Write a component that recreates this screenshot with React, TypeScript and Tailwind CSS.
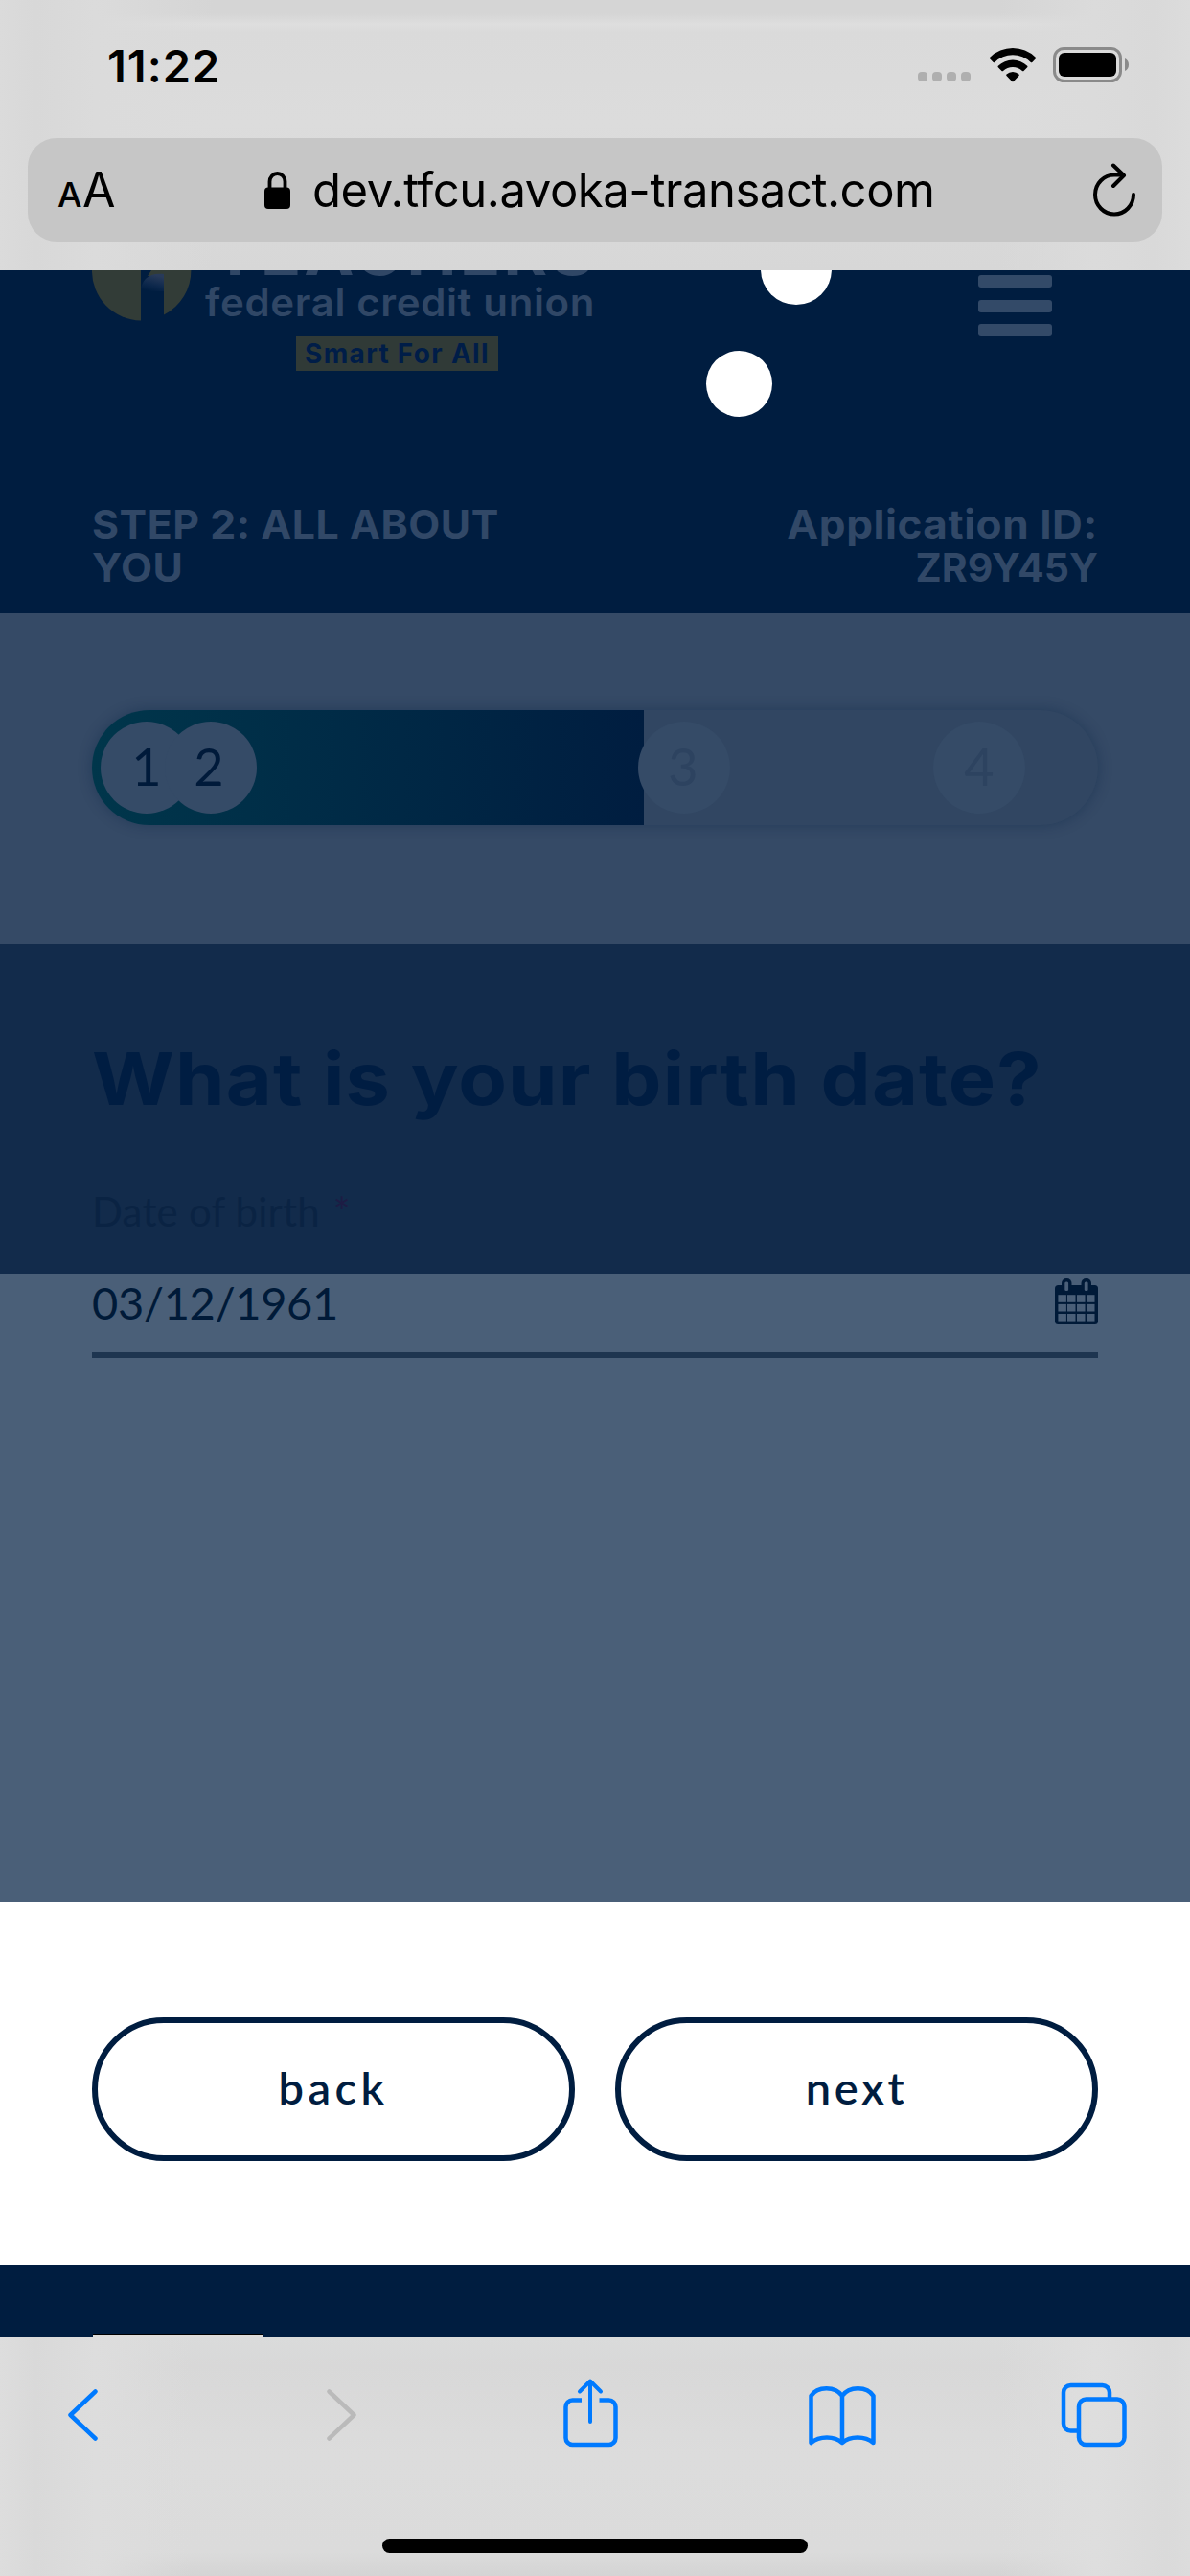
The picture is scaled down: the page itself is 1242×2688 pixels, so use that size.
import React from "react";

function StatusBar() {
  return (
    <div className="flex h-[136px] items-center pl-[112px] pr-[63px] text-black">
      <span className="text-[47px] font-semibold leading-none tracking-[1px]">11:22</span>
      <div className="ml-auto flex items-center">
        <div className="mt-[24px] flex gap-[5px]">
          <i className="h-[10px] w-[10px] rounded-[4px] bg-[#afafaf]" />
          <i className="h-[10px] w-[10px] rounded-[4px] bg-[#afafaf]" />
          <i className="h-[10px] w-[10px] rounded-[4px] bg-[#afafaf]" />
          <i className="h-[10px] w-[10px] rounded-[4px] bg-[#afafaf]" />
        </div>
        <svg className="ml-[19px]" width="50" height="36" viewBox="0 0 50 36">
          <path d="M1.2 9.8a34 34 0 0 1 47.6 0c.5.5.5 1 .1 1.5l-3.6 3.6c-.5.5-1 .5-1.5 0a27 27 0 0 0-37.6 0c-.5.5-1 .5-1.5 0L1.1 11.3c-.4-.5-.4-1 .1-1.5Z" />
          <path d="M9.8 18.8a21.5 21.5 0 0 1 30.4 0c.5.5.5 1 0 1.5L36.5 24c-.5.4-1 .4-1.5 0a14.600 14.600 0 0 0-20 0c-.5.4-1 .4-1.500 0l-3.700-3.700c-.5-.5-.5-1 0-1.500Z" />
          <path d="M18.500 27.600a9.500 9.500 0 0 1 13 0c.5.5.5 1 0 1.500l-5.700 5.800c-.5.5-1.100.5-1.600 0l-5.700-5.800c-.5-.5-.5-1 0-1.500Z" />
        </svg>
        <svg className="ml-[17px]" width="80" height="38" viewBox="0 0 80 38">
          <rect x="1.500" y="1.500" width="69" height="34" rx="10" fill="none" stroke="#8a8a8a" strokeWidth="3" />
          <rect x="6" y="6" width="60" height="25" rx="6" />
          <path d="M75 12c2.500 1 4 3.500 4 6.500S77.500 24 75 25Z" fill="#8a8a8a" />
        </svg>
      </div>
    </div>
  );
}

function AddressBar() {
  return (
    <div className="mx-[29px] mt-[8px] flex h-[108px] items-center rounded-[30px] bg-[#c6c6c6] pl-[32px] pr-[27px] text-black">
      <div className="flex w-[58px] items-baseline leading-none">
        <span className="-ml-[1px] text-[36px] font-medium tracking-[0.500px]">A</span>
        <span className="text-[50px]">A</span>
      </div>
      <svg className="ml-[157px]" width="27" height="39" viewBox="0 0 27 39">
        <rect y="16.500" width="27" height="22.500" rx="4" />
        <path d="M5.500 18v-7.500a8 8.500 0 0 1 16 0V18" fill="none" stroke="black" strokeWidth="3.800" />
      </svg>
      <span className="ml-[23px] whitespace-nowrap text-[49px] leading-none tracking-[-0.470px]">
        dev.tfcu.avoka-transact.com
      </span>
      <svg className="ml-auto" width="46" height="56" viewBox="0 0 46 56" fill="none" stroke="black" strokeWidth="4" strokeLinecap="round" strokeLinejoin="round">
        <path d="M43 33A20 20.500 0 1 1 23 12.500h9" />
        <path d="M22 2.500l11 10.500-11 11" />
      </svg>
    </div>
  );
}

function BrandMark() {
  return (
    <svg width="104" height="53" viewBox="0 0 104 53">
      <defs>
        <linearGradient id="trunk" x1="0.700" y1="0.100" x2="0.400" y2="1">
          <stop offset="0" stopColor="#283a59" />
          <stop offset="0.600" stopColor="#0d284c" />
          <stop offset="1" stopColor="#001d40" />
        </linearGradient>
      </defs>
      <path d="M0 0H51V52.500A51.700 51.700 0 0 1 0 0Z" fill="#323c37" />
      <path d="M62 0H103.400A51.700 51.700 0 0 1 75 46.500V0Z" fill="#323c37" />
      <path d="M62 0H76V6H58Z" fill="#323c37" />
      <path d="M51 22C51 10 60 2 75 4V22Z" fill="url(#trunk)" />
    </svg>
  );
}

function Header() {
  return (
    <header className="relative h-[358px] overflow-hidden bg-[#001d40] px-[96px]">
      <div className="flex h-[243px] items-start">
        <BrandMark />
        <div className="ml-[14px] flex w-[404px] flex-col text-[#304766]">
          <span className="-mt-[55px] ml-[8px] whitespace-nowrap text-[70px] font-bold leading-[70px] tracking-[3px]">TEACHERS</span>
          <span className="-mt-[1px] origin-left scale-x-[1.050] whitespace-nowrap text-[40px] font-semibold leading-[40px] tracking-[0.600px]">
            federal credit union
          </span>
          <span className="ml-[95px] mt-[15px] flex h-[36px] w-[211px] items-center justify-center whitespace-nowrap bg-[#303a37] text-[28px] font-bold leading-none tracking-[1.300px] text-[#001d48]">
            Smart For All
          </span>
        </div>
        <div className="ml-auto mr-[48px] mt-[5px] flex flex-col gap-[12.500px]">
          <i className="h-[13px] w-[77px] rounded-[3px] bg-[#334a68]" />
          <i className="h-[13px] w-[77px] rounded-[3px] bg-[#334a68]" />
          <i className="h-[13px] w-[77px] rounded-[3px] bg-[#334a68]" />
        </div>
      </div>
      <div className="flex justify-between text-[41px] font-bold leading-[45px] text-[#314867]">
        <div className="flex origin-left scale-x-[1.045] flex-col tracking-[0.500px]">
          <span>STEP 2: ALL ABOUT</span>
          <span>YOU</span>
        </div>
        <div className="flex flex-col items-end">
          <span className="origin-right scale-x-[1.075] tracking-[0.500px]">Application ID:</span>
          <span>ZR9Y45Y</span>
        </div>
      </div>
      <i className="absolute left-[794px] top-[-38px] h-[74px] w-[74px] rounded-full bg-white" />
      <i className="absolute left-[737px] top-[84px] h-[69px] w-[69px] rounded-full bg-white" />
    </header>
  );
}

function Progress() {
  return (
    <section className="h-[345px] bg-[#354a66] px-[96px] pt-[101px] font-['Lato',sans-serif] text-[54px] leading-none">
      <div className="flex h-[120px] items-center rounded-full bg-[#314662] shadow-[0_0_14px_1px_rgba(0,29,64,0.3)]">
        <div className="flex h-full w-[576px] items-center rounded-l-full rounded-r-[3px] bg-linear-to-r from-[#00364b] to-[#001d40] pl-[9px] text-[#001a3a]">
          <span className="flex h-[96px] w-[96px] items-center justify-center rounded-full bg-[#354b67] pb-[3px]">1</span>
          <span className="-ml-[29px] flex h-[96px] w-[96px] items-center justify-center rounded-full bg-[#354b67] pb-[3px] pr-[4px]">2</span>
        </div>
        <span className="-ml-[6px] flex h-[96px] w-[96px] items-center justify-center rounded-full bg-[#354b67] pb-[3px] pr-[2px] text-[#2d4360]">3</span>
        <span className="ml-[212px] flex h-[96px] w-[96px] items-center justify-center rounded-full bg-[#354b67] pb-[3px] text-[#2d4360]">4</span>
      </div>
    </section>
  );
}

function CalendarIcon() {
  return (
    <svg width="45" height="48" viewBox="0 0 45 48">
      <rect y="7" width="45" height="41" rx="3.500" fill="#001a38" />
      <rect x="7" width="10.500" height="17" rx="5" fill="#001a38" />
      <rect x="27.500" width="10.500" height="17" rx="5" fill="#001a38" />
      <rect x="10.300" y="3.500" width="3.800" height="9.500" rx="1.500" fill="#4a5f78" />
      <rect x="30.800" y="3.500" width="3.800" height="9.500" rx="1.500" fill="#4a5f78" />
      {[17.2, 26.9, 37].map((y) =>
        [3.4, 13, 23, 33].map((x) => <rect key={`${x}-${y}`} x={x} y={y} width="8.500" height="7.600" fill="#4a5f78" />),
      )}
    </svg>
  );
}

function Question() {
  return (
    <>
      <section className="h-[344px] bg-[#122b4b] px-[96px] pt-[100px]">
        <h1 className="origin-left scale-x-[1.090] whitespace-nowrap text-[76px] font-bold leading-[80px] tracking-[1px] text-[#001d42]">
          What is your birth date?
        </h1>
        <label className="mt-[75px] block font-['Lato',sans-serif] text-[42px] leading-[48px] tracking-[0.200px] text-[#0a2343]">
          Date of birth <span className="ml-[3px] text-[#1d1c44]">*</span>
        </label>
      </section>
      <section className="h-[656px] bg-[#4a5f78] px-[96px] pt-[5px]">
        <div className="flex h-[83px] items-start justify-between border-b-[6px] border-[#1e3550]">
          <span className="font-['Lato',sans-serif] text-[47px] leading-[50px] tracking-[-0.370px] text-[#001a38]">03/12/1961</span>
          <CalendarIcon />
        </div>
      </section>
    </>
  );
}

function Actions() {
  return (
    <section className="flex h-[378px] gap-[42px] bg-white px-[96px] pt-[120px]">
      <button className="h-[150px] flex-1 rounded-full border-[6px] border-[#001d40] pb-[4px] font-['Lato',sans-serif] text-[47px] font-semibold tracking-[4.400px] text-[#001d40]">
        back
      </button>
      <button className="h-[150px] flex-1 rounded-full border-[6px] border-[#001d40] pb-[4px] font-['Lato',sans-serif] text-[47px] font-semibold tracking-[3.600px] text-[#001d40]">
        next
      </button>
    </section>
  );
}

function Toolbar() {
  return (
    <footer className="flex h-[249px] flex-col items-center bg-[#dadada] bg-[linear-gradient(90deg,#dddddd_0,#d9d9d9_3%,#dddddd_8%,transparent_16%,transparent_84%,#dedede_92%,#dadada_98%,#dcdcdc_100%),linear-gradient(180deg,#dadbdb_0,#d8d8d8_12%,#dcdcdc_50%,#dbdbdb_90%,#d4d4d4_100%)]">
      <svg className="mt-[36px]" width="1242" height="84" viewBox="0 2475 1242 84" fill="none" stroke="#007aff" strokeWidth="4.500" strokeLinecap="round" strokeLinejoin="round">
        <path d="M99.500 2495.500 73.500 2520 99.500 2544.500" />
        <path d="M343.500 2495.500 369.500 2520 343.500 2544.500" stroke="#bababa" />
        <path d="M607 2504.500H597.500a7 7 0 0 0-7 7V2544a7 7 0 0 0 7 7H635.500a7 7 0 0 0 7-7V2511.500a7 7 0 0 0-7-7H625.500" strokeLinecap="butt" />
        <path d="M616 2527V2485M605 2495.500 616 2484.500 627 2495.500" strokeWidth="4" />
        <path d="M846.500 2549V2500C853 2489.500 872 2489.500 879 2500 886 2489.500 905 2489.500 911.500 2500V2549C903 2541.500 887 2541.500 879 2549 871 2541.500 855 2541.500 846.500 2549ZM879 2500V2549" />
        <path d="M1126 2536.500H1117.500a7.500 7.500 0 0 1-7.500-7.500V2496.500a7.500 7.500 0 0 1 7.500-7.500H1150.500a7.500 7.500 0 0 1 7.500 7.500V2503" strokeLinecap="butt" />
        <rect x="1126" y="2503.500" width="47.500" height="47.500" rx="7.500" />
      </svg>
      <div className="mt-[90px] h-[15px] w-[444px] rounded-full bg-black" />
    </footer>
  );
}

export default function App() {
  return (
    <div className="flex h-[2688px] w-[1242px] flex-col overflow-hidden font-['Inter',sans-serif]">
      <div className="h-[282px] bg-[#dbdbdb] bg-[linear-gradient(90deg,#dbdbdb_0,#d8d8d8_3%,#dbdbdb_8%,transparent_18%,transparent_84%,#dbdbdb_92%,#d9d9d9_97%,#dcdcdc_100%),linear-gradient(180deg,#d5d5d5_0,#d5d5d5_5%,#dedede_9%,#dadada_12%,#dcdcdc_45%,#d7d7d7_100%)]">
        <StatusBar />
        <AddressBar />
      </div>
      <Header />
      <Progress />
      <Question />
      <Actions />
      <div className="flex h-[76px] items-end bg-[#001d40] pl-[97px]">
        <div className="h-[4px] w-[178px] border-t border-black bg-[#dedcda]" />
      </div>
      <Toolbar />
    </div>
  );
}
